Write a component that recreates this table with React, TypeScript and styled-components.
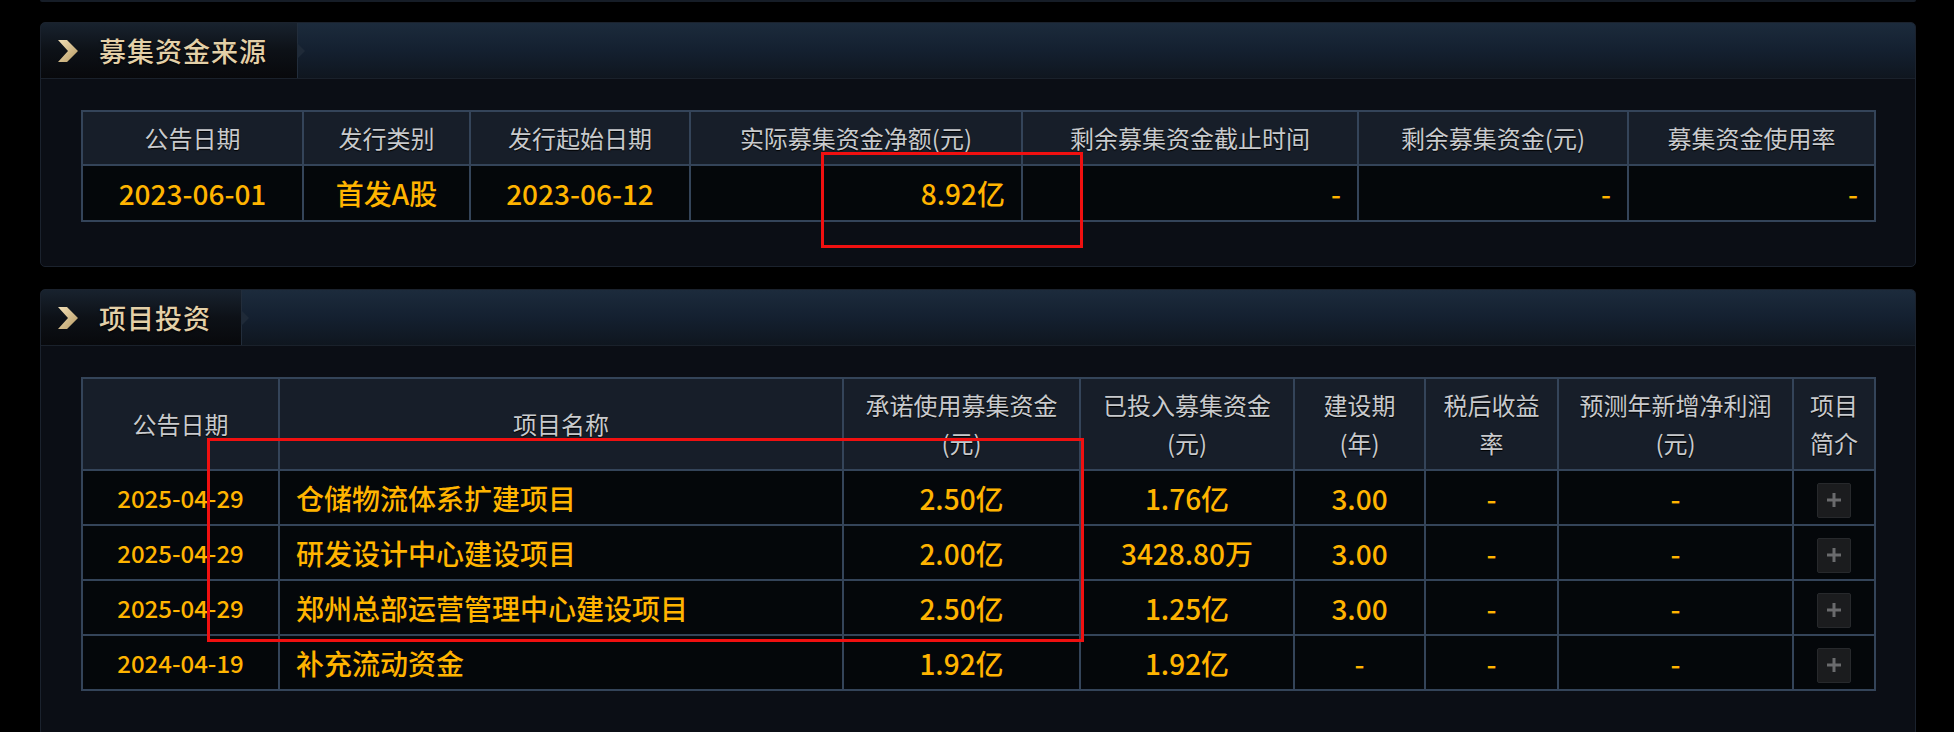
import React from 'react'
import styled, { createGlobalStyle } from 'styled-components'

const GlobalStyle = createGlobalStyle`
  html, body {
    margin: 0;
    padding: 0;
    background: #000;
  }
  body {
    font-family: "Noto Sans CJK SC", "Noto Sans", sans-serif;
    overflow: hidden;
  }
`

const Page = styled.div`
  display: flex;
  flex-direction: column;
  padding: 0 38px 0 40px;
`

const PrevEdge = styled.div`
  height: 2px;
  margin-bottom: 20px;
  background: #161d27;
  border-radius: 0 0 4px 4px;
`

const Panel = styled.section`
  display: flex;
  flex-direction: column;
  margin-bottom: 22px;
  background: #0b0e15;
  border: 1px solid #1b222d;
  border-radius: 5px;
  overflow: hidden;
`

const Header = styled.div`
  display: flex;
  height: 55px;
  border-bottom: 1px solid #1a212b;
  background: linear-gradient(180deg, #1c2b3c 0%, #142030 50%, #0f161f 100%);
`

const Tab = styled.div`
  position: relative;
  display: flex;
  align-items: center;
  gap: 20px;
  padding: 0 30px 0 16px;
  background: linear-gradient(180deg, #18222e 0%, #0d1117 50%, #08090c 100%);
  border-right: 1px solid #222d3b;

  &::after {
    content: '';
    position: absolute;
    right: -8px;
    top: 50%;
    margin-top: -8px;
    border-style: solid;
    border-width: 8px 0 8px 8px;
    border-color: transparent transparent transparent #1f2a38;
  }
`

const Title = styled.h2`
  margin: 0;
  font-size: 27px;
  font-weight: 500;
  letter-spacing: 1px;
  color: #e3d0a8;
  text-shadow: 0 1px 2px #000;
`

const Fill = styled.div`
  flex: 1;
`

const Body = styled.div<{ $bottom: number }>`
  padding: 31px 40px ${p => p.$bottom}px 40px;
`

const TableWrap = styled.div`
  position: relative;
`

const Table = styled.table`
  width: 100%;
  border-collapse: collapse;
  table-layout: fixed;
  border: 2px solid #344459;
`

const Th = styled.th`
  padding: 7px 6px;
  line-height: 38px;
  font-size: 24px;
  font-weight: 400;
  color: #c8cacd;
  text-shadow: 0 1px 1px #000;
  background: #171e29;
  border: 2px solid #344459;
  text-align: center;
  vertical-align: middle;
`

const Row = styled.tr<{ $h: number }>`
  height: ${p => p.$h}px;
`

const Td = styled.td<{ $align?: string; $size?: number }>`
  padding: 0 16px;
  font-size: ${p => p.$size || 28}px;
  font-weight: 500;
  line-height: 38px;
  color: #ffb400;
  background: #04070a;
  border: 2px solid #344459;
  text-align: ${p => p.$align || 'center'};
  vertical-align: middle;
  white-space: nowrap;
`

const Mark = styled.div<{ $x: number; $y: number; $w: number; $h: number }>`
  position: absolute;
  left: ${p => p.$x}px;
  top: ${p => p.$y}px;
  width: ${p => p.$w}px;
  height: ${p => p.$h}px;
  box-sizing: border-box;
  border: 3px solid #f01010;
  pointer-events: none;
`

const PlusButton = styled.span`
  display: inline-flex;
  align-items: center;
  justify-content: center;
  width: 34px;
  height: 35px;
  box-sizing: border-box;
  background: #1b1c1e;
  border: 1px solid #27292c;
  border-radius: 2px;
  vertical-align: middle;
`

const Chevron = () => (
  <svg width="22" height="24" viewBox="0 0 22 24">
    <defs>
      <linearGradient id="chev" x1="0" y1="0" x2="1" y2="1">
        <stop offset="0" stopColor="#f3e1b8" />
        <stop offset="1" stopColor="#b79a63" />
      </linearGradient>
    </defs>
    <path d="M1 1 L10 1 L21 12 L10 23 L1 23 L11 12 Z" fill="url(#chev)" />
  </svg>
)

const Plus = () => (
  <PlusButton>
    <svg width="14" height="14" viewBox="0 0 14 14">
      <rect x="5.5" y="0" width="3" height="14" fill="#6a6b6d" />
      <rect x="0" y="5.5" width="14" height="3" fill="#6a6b6d" />
    </svg>
  </PlusButton>
)

const PanelHead = ({ title }: { title: string }) => (
  <Header>
    <Tab>
      <Chevron />
      <Title>{title}</Title>
    </Tab>
    <Fill />
  </Header>
)

const projects = [
  { date: '2025-04-29', name: '仓储物流体系扩建项目', promised: '2.50亿', invested: '1.76亿', period: '3.00' },
  { date: '2025-04-29', name: '研发设计中心建设项目', promised: '2.00亿', invested: '3428.80万', period: '3.00' },
  { date: '2025-04-29', name: '郑州总部运营管理中心建设项目', promised: '2.50亿', invested: '1.25亿', period: '3.00' },
  { date: '2024-04-19', name: '补充流动资金', promised: '1.92亿', invested: '1.92亿', period: '-' },
]

export default function App() {
  return (
    <>
      <GlobalStyle />
      <Page>
        <PrevEdge />

        <Panel>
          <PanelHead title="募集资金来源" />
          <Body $bottom={44}>
            <TableWrap>
              <Table>
                <colgroup>
                  <col style={{ width: 221 }} />
                  <col style={{ width: 167 }} />
                  <col style={{ width: 220 }} />
                  <col style={{ width: 332 }} />
                  <col style={{ width: 336 }} />
                  <col style={{ width: 270 }} />
                  <col style={{ width: 247 }} />
                </colgroup>
                <thead>
                  <tr>
                    <Th>公告日期</Th>
                    <Th>发行类别</Th>
                    <Th>发行起始日期</Th>
                    <Th>实际募集资金净额(元)</Th>
                    <Th>剩余募集资金截止时间</Th>
                    <Th>剩余募集资金(元)</Th>
                    <Th>募集资金使用率</Th>
                  </tr>
                </thead>
                <tbody>
                  <Row $h={56}>
                    <Td>2023-06-01</Td>
                    <Td>首发A股</Td>
                    <Td>2023-06-12</Td>
                    <Td $align="right">8.92亿</Td>
                    <Td $align="right">-</Td>
                    <Td $align="right">-</Td>
                    <Td $align="right">-</Td>
                  </Row>
                </tbody>
              </Table>
              <Mark $x={740} $y={42} $w={262} $h={96} />
            </TableWrap>
          </Body>
        </Panel>

        <Panel>
          <PanelHead title="项目投资" />
          <Body $bottom={44}>
            <TableWrap>
              <Table>
                <colgroup>
                  <col style={{ width: 197 }} />
                  <col style={{ width: 564 }} />
                  <col style={{ width: 237 }} />
                  <col style={{ width: 214 }} />
                  <col style={{ width: 131 }} />
                  <col style={{ width: 133 }} />
                  <col style={{ width: 235 }} />
                  <col style={{ width: 82 }} />
                </colgroup>
                <thead>
                  <tr>
                    <Th>公告日期</Th>
                    <Th>项目名称</Th>
                    <Th>承诺使用募集资金<br />(元)</Th>
                    <Th>已投入募集资金<br />(元)</Th>
                    <Th>建设期<br />(年)</Th>
                    <Th>税后收益<br />率</Th>
                    <Th>预测年新增净利润<br />(元)</Th>
                    <Th>项目<br />简介</Th>
                  </tr>
                </thead>
                <tbody>
                  {projects.map((p, i) => (
                    <Row $h={55} key={i}>
                      <Td $size={24}>{p.date}</Td>
                      <Td $align="left">{p.name}</Td>
                      <Td>{p.promised}</Td>
                      <Td>{p.invested}</Td>
                      <Td>{p.period}</Td>
                      <Td>-</Td>
                      <Td>-</Td>
                      <Td><Plus /></Td>
                    </Row>
                  ))}
                </tbody>
              </Table>
              <Mark $x={126} $y={61} $w={877} $h={204} />
            </TableWrap>
          </Body>
        </Panel>
      </Page>
    </>
  )
}
